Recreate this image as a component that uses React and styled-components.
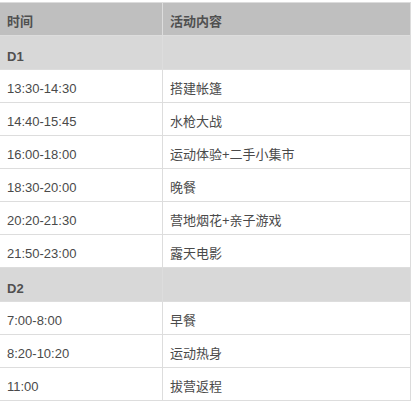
import React from "react";
import styled, { createGlobalStyle } from "styled-components";

const GlobalStyle = createGlobalStyle`
  body {
    margin: 0;
    background: #fff;
    font-family: "Liberation Sans", Arial, "Noto Sans CJK SC", sans-serif;
  }
`;

const Table = styled.div`
  width: 411px;
  margin-top: 2px;
  border-top: 1px solid #dcdcdc;
  border-right: 1px solid #dcdcdc;
  box-sizing: border-box;
`;

const Row = styled.div`
  display: grid;
  grid-template-columns: 163px 1fr;
  border-bottom: 1px solid #dddddd;
  background: ${(p) =>
    p.$kind === "head" ? "#bfbfbf" : p.$kind === "day" ? "#d8d8d8" : "#ffffff"};
`;

const Cell = styled.div`
  box-sizing: border-box;
  padding: ${(p) => (p.$day ? "12px 7px 3px" : "10px 7px 4px")};
  line-height: 18px;
  font-size: 13px;
  font-weight: ${(p) => (p.$bold ? 700 : 400)};
  color: ${(p) => (p.$bold ? "#505050" : "#4a4a4a")};
  white-space: nowrap;

  &:first-child {
    border-right: 1px solid #dddddd;
  }
`;

const schedule = [
  { day: "D1" },
  { time: "13:30-14:30", what: "搭建帐篷" },
  { time: "14:40-15:45", what: "水枪大战" },
  { time: "16:00-18:00", what: "运动体验+二手小集市" },
  { time: "18:30-20:00", what: "晚餐" },
  { time: "20:20-21:30", what: "营地烟花+亲子游戏" },
  { time: "21:50-23:00", what: "露天电影" },
  { day: "D2" },
  { time: "7:00-8:00", what: "早餐" },
  { time: "8:20-10:20", what: "运动热身" },
  { time: "11:00", what: "拔营返程" },
];

export default function App() {
  return (
    <>
      <GlobalStyle />
      <Table>
        <Row $kind="head">
          <Cell $bold>时间</Cell>
          <Cell $bold>活动内容</Cell>
        </Row>
        {schedule.map((item, i) =>
          item.day ? (
            <Row key={i} $kind="day">
              <Cell $bold $day>
                {item.day}
              </Cell>
              <Cell $day />
            </Row>
          ) : (
            <Row key={i}>
              <Cell>{item.time}</Cell>
              <Cell>{item.what}</Cell>
            </Row>
          )
        )}
      </Table>
    </>
  );
}
